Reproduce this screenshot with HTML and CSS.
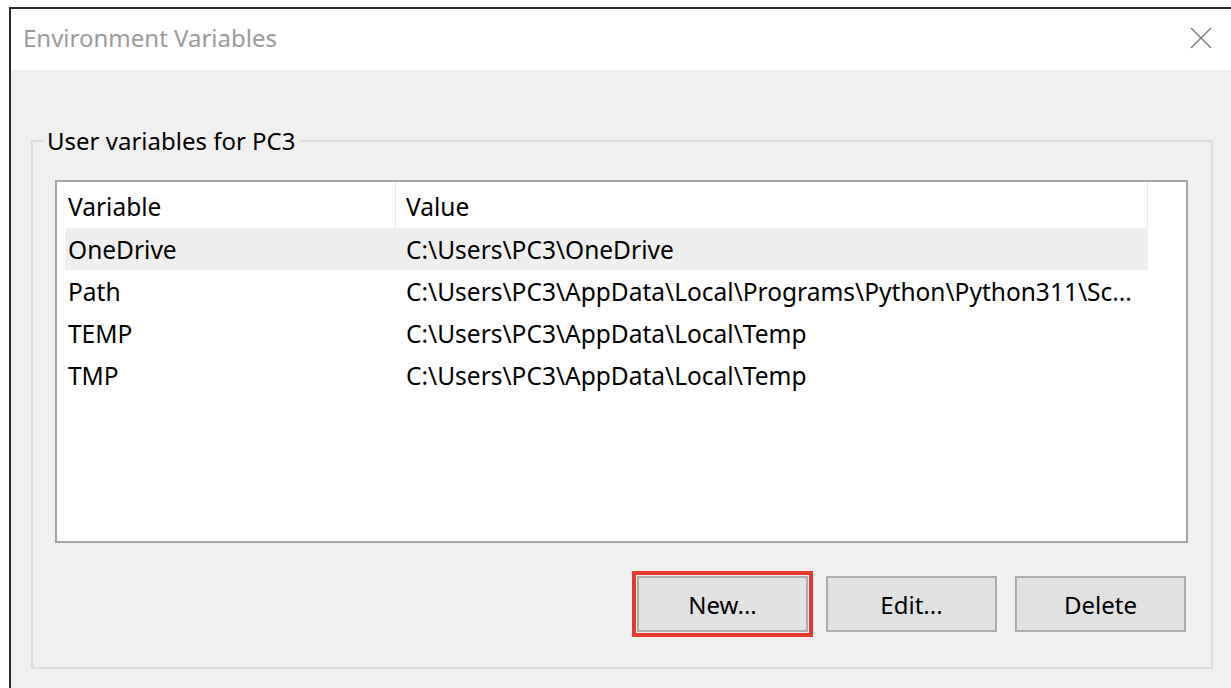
FILE: index.html
```html
<!DOCTYPE html>
<html lang="en">
<head>
<meta charset="utf-8">
<title>Environment Variables</title>
<link rel="stylesheet" href="styles.css">
</head>
<body>
<div class="window">
  <div class="titlebar">
    <span class="title">Environment Variables</span>
    <svg class="close" width="22" height="22" viewBox="0 0 22 22" aria-label="Close">
      <path d="M1 1 L21 21 M21 1 L1 21" stroke="#7a7a7a" stroke-width="1.4" fill="none"/>
    </svg>
  </div>
  <div class="content">
    <fieldset class="group">
      <legend class="group-label">User variables for PC3</legend>
      <div class="list">
        <div class="list-header">
          <div class="hcell hcell-var">Variable</div>
          <div class="hcell hcell-val">Value</div>
        </div>
        <div class="row selected">
          <div class="cell cell-var">OneDrive</div>
          <div class="cell cell-val">C:\Users\PC3\OneDrive</div>
        </div>
        <div class="row">
          <div class="cell cell-var">Path</div>
          <div class="cell cell-val">C:\Users\PC3\AppData\Local\Programs\Python\Python311\Sc...</div>
        </div>
        <div class="row">
          <div class="cell cell-var">TEMP</div>
          <div class="cell cell-val">C:\Users\PC3\AppData\Local\Temp</div>
        </div>
        <div class="row">
          <div class="cell cell-var">TMP</div>
          <div class="cell cell-val">C:\Users\PC3\AppData\Local\Temp</div>
        </div>
      </div>
      <div class="buttons">
        <button class="btn btn-highlight">New...</button>
        <button class="btn">Edit...</button>
        <button class="btn">Delete</button>
      </div>
    </fieldset>
  </div>
</div>
</body>
</html>
```

FILE: styles.css
```css
html, body {
  margin: 0;
  padding: 0;
  background: #ffffff;
  overflow: hidden;
  width: 1231px;
  height: 688px;
}

body {
  font-family: "Noto Sans", "Open Sans", sans-serif;
  color: #000;
}

.window {
  margin: 7px 0 0 9px;
  width: 1222px;
  height: 700px;
  box-sizing: border-box;
  border-left: 2px solid #2a2a2a;
  border-top: 2px solid #2a2a2a;
  background: #f0f0f0;
}

.titlebar {
  height: 61px;
  box-sizing: border-box;
  background: #ffffff;
  display: flex;
  align-items: center;
  justify-content: space-between;
  padding: 0 19px 4px 12px;
}

.title {
  font-size: 24px;
  color: #9b9b9b;
  line-height: 30px;
}

.close {
  display: block;
}

.content {
  padding: 56px 0 0 20px;
}

.group {
  margin: 0;
  width: 1182px;
  box-sizing: border-box;
  border: 2px solid #dedede;
  padding: 24px 23px 35px 22px;
}

.group-label {
  font-size: 24px;
  line-height: 30px;
  padding: 0 4px;
  margin-left: -12px;
}

.list {
  width: 1133px;
  height: 363px;
  box-sizing: border-box;
  border: 2px solid #a3a5aa;
  background: #ffffff;
  font-size: 24.5px;
}

.list-header {
  display: flex;
  height: 46px;
  align-items: stretch;
}

.hcell {
  display: flex;
  align-items: center;
  box-sizing: border-box;
  border-right: 1px solid #e5e5e5;
  padding-top: 3px;
}

.hcell-var {
  width: 339px;
  padding-left: 11px;
}

.hcell-val {
  width: 752px;
  padding-left: 10px;
}

.row {
  display: flex;
  height: 42px;
  margin-left: 8px;
  width: 1083px;
  align-items: center;
}

.row.selected {
  background: #efefef;
}

.cell {
  box-sizing: border-box;
  white-space: nowrap;
}

.cell-var {
  width: 331px;
  padding-left: 3px;
}

.cell-val {
  padding-left: 10px;
}

.buttons {
  display: flex;
  justify-content: flex-end;
  gap: 18px;
  margin-top: 33px;
  padding-right: 2px;
}

.btn {
  width: 171px;
  height: 56px;
  box-sizing: border-box;
  background: #e1e1e1;
  border: 2px solid #adadad;
  font-family: "Noto Sans", "Open Sans", sans-serif;
  font-size: 24px;
  color: #000;
  padding: 0;
}

.btn-highlight {
  outline: 4px solid #e8392d;
  outline-offset: 1px;
}
```
